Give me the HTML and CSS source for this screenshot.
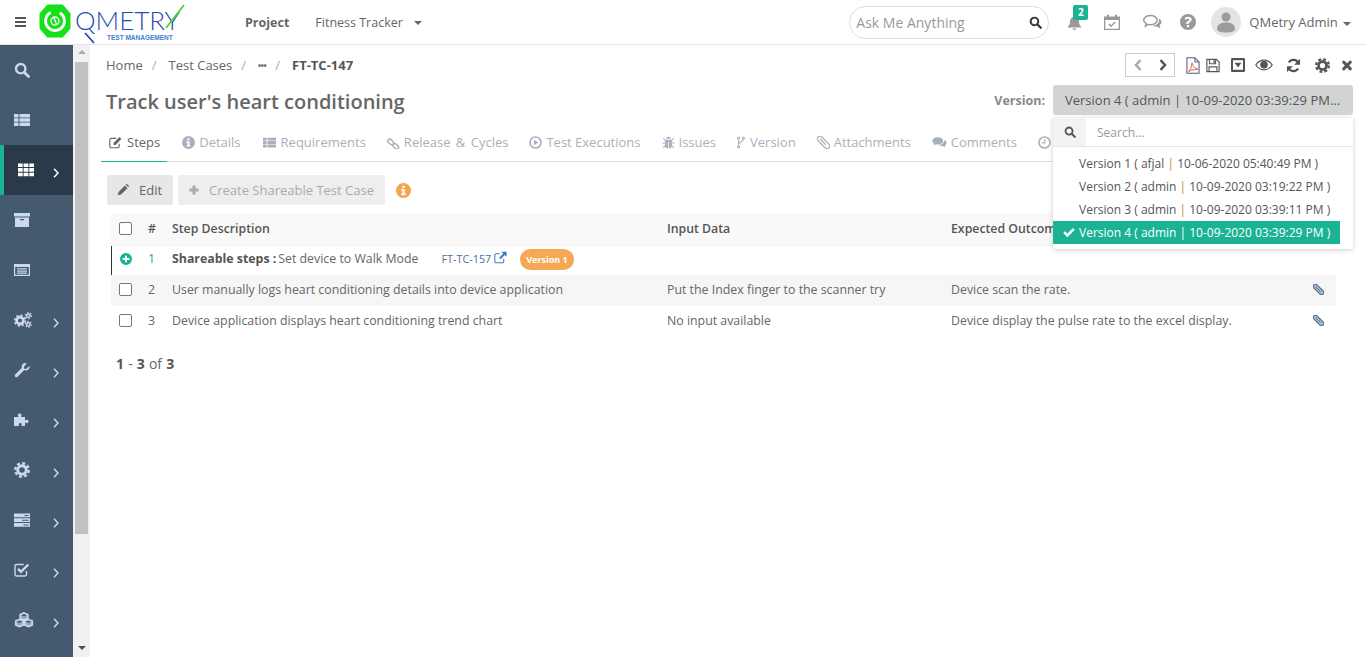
FILE: index.html
```html
<!DOCTYPE html>
<html>
<head>
    <title>QMetry Test Management</title>
    <link rel="stylesheet" href="styles.css">
</head>
<body>
    <svg class="sprite" xmlns="http://www.w3.org/2000/svg">
        <symbol id="i-search" viewBox="0 0 16 16"><circle cx="6.7" cy="6.7" r="4.7" fill="none" stroke="currentColor" stroke-width="2.4"/><path d="M10.2 10.2l4.3 4.3" stroke="currentColor" stroke-width="2.8" stroke-linecap="round"/></symbol>
        <symbol id="i-list" viewBox="0 0 16 16"><path fill="currentColor" d="M0 2h4.5v3.4H0zM5.5 2H16v3.4H5.5zM0 6.3h4.5v3.4H0zM5.5 6.3H16v3.4H5.5zM0 10.6h4.5V14H0zM5.5 10.6H16V14H5.5z"/></symbol>
        <symbol id="i-grid" viewBox="0 0 16 16"><path fill="currentColor" d="M0 1.500h4.700v3.600H0zM5.600 1.500h4.800v3.600H5.600zM11.300 1.500H16v3.600h-4.700zM0 6.100h4.700v3.600H0zM5.600 6.100h4.800v3.600H5.600zM11.300 6.100H16v3.600h-4.700zM0 10.700h4.700v3.600H0zM5.600 10.700h4.800v3.600H5.600zM11.300 10.700H16v3.600h-4.700z"/></symbol>
        <symbol id="i-archive" viewBox="0 0 16 16"><path fill="currentColor" fill-rule="evenodd" d="M0 1h16v3.500H0zM1 5.500h14V15H1zM6 7v1.200h4V7z"/></symbol>
        <symbol id="i-card" viewBox="0 0 16 16"><path fill="currentColor" fill-rule="evenodd" d="M0 2h16v12H0zM1.200 5v7.800h13.600V5zM3 6.200h10v1.400H3zM3 8.400h10v1.400H3zM3 10.600h10v1.200H3z"/></symbol>
        <symbol id="i-cogs" viewBox="0 0 18 16"><circle cx="6" cy="8.600" r="3.400" fill="none" stroke="currentColor" stroke-width="2.800"/><circle cx="6" cy="8.600" r="5.400" fill="none" stroke="currentColor" stroke-width="1.600" stroke-dasharray="2.200 2"/><circle cx="14.400" cy="3.600" r="1.700" fill="none" stroke="currentColor" stroke-width="1.500"/><circle cx="14.400" cy="3.600" r="3" fill="none" stroke="currentColor" stroke-width="1.100" stroke-dasharray="1.500 1.600"/><circle cx="14.400" cy="12.400" r="1.700" fill="none" stroke="currentColor" stroke-width="1.500"/><circle cx="14.400" cy="12.400" r="3" fill="none" stroke="currentColor" stroke-width="1.100" stroke-dasharray="1.500 1.600"/></symbol>
        <symbol id="i-wrench" viewBox="0 0 16 16"><path fill="currentColor" d="M15.600 4.200c.3 2.400-1.700 4.500-4.200 4.200-.4 0-.8-.1-1.100-.3L3.600 14.800c-.7.700-1.700.7-2.400 0-.7-.7-.7-1.700 0-2.400l6.700-6.700c-.8-2.200.8-4.700 3.300-4.700.5 0 1 .1 1.400.3L9.900 4.900l.4 1.800 1.800.4 2.600-2.700c.4-.1.700-.1.900-.2z"/></symbol>
        <symbol id="i-puzzle" viewBox="0 0 16 16"><path fill="currentColor" d="M0 5h4.200c.3 0 .3-.4 0-.8-.9-1.200-.2-2.700 1.500-2.700s2.400 1.500 1.500 2.700c-.3.400-.3.800 0 .8H11v3.200c0 .3.400.3.800 0 1.200-.9 2.700-.2 2.700 1.300s-1.500 2.200-2.700 1.300c-.4-.3-.8-.3-.8 0V14H7.500c-.3 0-.3-.4 0-.8.700-1 .1-2.200-1.300-2.200s-2 1.200-1.300 2.200c.3.400.3.800 0 .8H0z"/></symbol>
        <symbol id="i-gear" viewBox="0 0 16 16"><circle cx="8" cy="8" r="4.300" fill="none" stroke="currentColor" stroke-width="3"/><circle cx="8" cy="8" r="6.800" fill="none" stroke="currentColor" stroke-width="2.400" stroke-dasharray="3 2.340"/></symbol>
        <symbol id="i-server" viewBox="0 0 16 16"><path fill="currentColor" fill-rule="evenodd" d="M0 1.500h16v3.800H0zM0 6.200h16V10H0zM0 10.900h16v3.800H0zM10.500 3v1h4V3zM8 7.700v1h6.500v-1zM9.500 12.400v1h5v-1z"/></symbol>
        <symbol id="i-check-sq" viewBox="0 0 16 16"><path fill="none" stroke="currentColor" stroke-width="1.400" d="M12.500 9v3.300c0 1-.7 1.700-1.700 1.700H2.700C1.700 14 1 13.300 1 12.300V4.200c0-1 .7-1.700 1.700-1.700h7"/><path fill="none" stroke="currentColor" stroke-width="2.400" d="M4 6.800l3 3L14.300 2.500"/></symbol>
        <symbol id="i-cubes" viewBox="0 0 20 16"><path fill="none" stroke="currentColor" stroke-width="1.700" d="M10 1l3.800 1.500v4L10 8 6.200 6.500v-4zM5.500 7.500l3.800 1.500v4l-3.800 1.500L1.700 13V9zM14.500 7.500L18.300 9v4l-3.800 1.500-3.800-1.500V9z"/><path fill="currentColor" d="M6.500 3L10 4.300 13.500 3v3.300L10 7.700 6.500 6.300zM2 9.500l3.500 1.300L9 9.500v3.300l-3.500 1.400L2 12.800zM11 9.500l3.500 1.300L18 9.500v3.300l-3.500 1.400-3.500-1.400z" opacity=".6"/></symbol>
        <symbol id="i-chevron" viewBox="0 0 6 10"><path fill="none" stroke="currentColor" stroke-width="1.500" d="M1 .8L5 5 1 9.200"/></symbol>
        <symbol id="i-chevron-b" viewBox="0 0 8 12"><path fill="none" stroke="currentColor" stroke-width="2.500" d="M1.500 1.200L6 6l-4.500 4.800"/></symbol>
        <symbol id="i-chevron-l" viewBox="0 0 8 12"><path fill="none" stroke="currentColor" stroke-width="2.500" d="M6.500 1.200L2 6l4.500 4.800"/></symbol>
        <symbol id="i-bell" viewBox="0 0 16 16"><path fill="currentColor" d="M8 .5c.6 0 1 .4 1 1v.6c2.300.4 3.800 2.300 3.800 4.700 0 3 1 4.200 2.200 5.400v1H1v-1c1.200-1.200 2.200-2.400 2.200-5.400C3.200 4.400 4.700 2.500 7 2.100v-.6c0-.6.400-1 1-1zM6 14.500h4c0 1.100-.9 1.500-2 1.500s-2-.4-2-1.500z"/></symbol>
        <symbol id="i-calendar" viewBox="0 0 16 16"><path fill="currentColor" fill-rule="evenodd" d="M0 2.500h3V.8h2v1.700h6V.8h2v1.700h3V16H0zM1.300 6v8.700h13.400V6z"/><path fill="none" stroke="currentColor" stroke-width="1.400" d="M4.800 10l2.200 2.300 4.200-4.300"/></symbol>
        <symbol id="i-chats" viewBox="0 0 20 16"><path fill="none" stroke="currentColor" stroke-width="1.500" d="M8 1.500c3.700 0 6.700 2 6.700 4.600s-3 4.600-6.700 4.600c-.8 0-1.600-.1-2.300-.3L3 12.200l.6-2.700C2 8.700 1.200 7.500 1.200 6.100 1.200 3.500 4.300 1.500 8 1.500z"/><path fill="currentColor" d="M16.300 4.500c1.700.8 2.700 2 2.700 3.500 0 1.200-.7 2.400-2 3.200l.8 3-3.400-1.800c-1.500.2-3-.1-4.300-.7 3.500-.2 6.500-2.300 6.500-5.200 0-.7-.1-1.400-.3-2z"/></symbol>
        <symbol id="i-help" viewBox="0 0 16 16"><path fill="currentColor" fill-rule="evenodd" d="M8 0a8 8 0 110 16A8 8 0 018 0zM7 11v2.300h2.200V11zM8.200 2.700c-1.900 0-3.100.9-3.700 2.100l1.500 1.100c.5-.8 1-1.200 2-1.200.8 0 1.400.4 1.400 1 0 1.400-3.300 1.300-3.300 4.300h2.200c0-1.800 3.400-1.900 3.400-4.500 0-1.800-1.600-2.800-3.500-2.800z"/></symbol>
        <symbol id="i-pdf" viewBox="0 0 15 18"><path fill="none" stroke="#4a6078" stroke-width="1.100" d="M1 .8h8.500L14 5.300v11.900H1z"/><path fill="none" stroke="#4a6078" stroke-width="1" d="M9.500 .8v4.500H14"/><path fill="none" stroke="#d8604a" stroke-width="1" d="M2.800 15c2.400-1.500 3.400-5 3.200-8 0-1 1.100-1 1.100 0 0 3 2 5 4.900 5.300.8.100.8 1 0 1-3 0-6.400.4-7.800 1.700-.8.700-1.700.4-1.400 0z"/></symbol>
        <symbol id="i-save" viewBox="0 0 16 16"><path fill="none" stroke="currentColor" stroke-width="1.300" d="M1 1h11l3 3v11H1zM4 1v5h7V1M3.500 15V9.500h9V15"/><path fill="currentColor" d="M8.500 2H10v3H8.500z"/></symbol>
        <symbol id="i-drop-sq" viewBox="1 1 14 14"><path fill="currentColor" fill-rule="evenodd" d="M2.500 1h11C14.500 1 15 1.500 15 2.500v11c0 1-.5 1.500-1.500 1.500h-11C1.500 15 1 14.500 1 13.500v-11C1 1.500 1.500 1 2.500 1zM3 3.200v9.600h10V3.200zM4.500 5.800h7L8 10.400z"/></symbol>
        <symbol id="i-eye" viewBox="0 0 18 12"><path fill="none" stroke="currentColor" stroke-width="1.200" d="M.8 6C3 2.800 5.800 1.200 9 1.200s6 1.600 8.200 4.800C15 9.200 12.200 10.800 9 10.800S3 9.200.8 6z"/><circle cx="9" cy="5.800" r="3.800" fill="currentColor"/></symbol>
        <symbol id="i-refresh" viewBox="0 0 16 16"><path fill="none" stroke="currentColor" stroke-width="2.300" d="M13.300 5.500A5.800 5.800 0 003 4.800M2.700 10.500A5.800 5.800 0 0013 11.200"/><path fill="currentColor" d="M15 .8v6.400H8.700zM1 15.200V8.800h6.300z"/></symbol>
        <symbol id="i-close" viewBox="0 0 16 16"><path stroke="currentColor" stroke-width="3.800" stroke-linecap="round" d="M3.500 3.500l9 9M12.500 3.500l-9 9"/></symbol>
        <symbol id="i-edit" viewBox="0 0 16 16"><path fill="none" stroke="currentColor" stroke-width="1.400" d="M12.500 9.500v3.300c0 1-.7 1.700-1.700 1.700H2.700c-1 0-1.700-.7-1.700-1.700V4.700c0-1 .7-1.700 1.700-1.700H9"/><path fill="currentColor" d="M5.500 8.500L12.800 1.200l2.500 2.500L8 11H5.500z"/></symbol>
        <symbol id="i-info" viewBox="0 0 16 16"><path fill="currentColor" fill-rule="evenodd" d="M8 0a8 8 0 110 16A8 8 0 018 0zM6.700 2.800v2.400h2.600V2.800zM5.500 6.500v1.700h1.200v3.100H5.500V13h5v-1.700H9.300V6.500z"/></symbol>
        <symbol id="i-link" viewBox="0 0 16 16"><g fill="none" stroke="currentColor" stroke-width="1.800"><rect x="-.8" y="-2.300" width="8" height="4.600" rx="2.300" transform="translate(2.200 5.200) rotate(42)"/><rect x="-.8" y="-2.300" width="8" height="4.600" rx="2.300" transform="translate(8.300 10.600) rotate(42)"/></g></symbol>
        <symbol id="i-play" viewBox="0 0 16 16"><circle cx="8" cy="8" r="6.800" fill="none" stroke="currentColor" stroke-width="2"/><path fill="currentColor" d="M6 4.500l5.500 3.500L6 11.500z"/></symbol>
        <symbol id="i-bug" viewBox="0 0 16 16"><path fill="currentColor" d="M5 3.500C5 2 6.300 1 8 1s3 1 3 2.500zM3.800 4.500h8.400V12c0 1.800-1.800 3.300-3.700 3.500V7h-1v8.500C5.600 15.300 3.800 13.800 3.800 12z"/><path fill="none" stroke="currentColor" stroke-width="1.300" d="M1.500 2.500l2.500 3M14.500 2.500l-2.500 3M.5 8.500H4M15.500 8.500H12M1.500 14.500l2.700-3M14.500 14.500l-2.700-3"/></symbol>
        <symbol id="i-fork" viewBox="0 0 10 16"><g fill="none" stroke="currentColor" stroke-width="1.300"><circle cx="2" cy="2.500" r="1.300"/><circle cx="2" cy="13.500" r="1.300"/><circle cx="8" cy="2.500" r="1.300"/><path d="M2 4v8M8 4c0 3.500-6 3-6 6"/></g></symbol>
        <symbol id="i-clip" viewBox="0 0 16 16"><g transform="rotate(-45 8 8)"><rect x="4.800" y="-1.500" width="6.400" height="19" rx="3.200" fill="#a9bfe0" stroke="currentColor" stroke-width="1.600"/><path d="M8 2v10" stroke="currentColor" stroke-width="1.300"/></g></symbol>
        <symbol id="i-clip-line" viewBox="0 0 16 16"><g transform="rotate(-45 8 8)" fill="none" stroke="currentColor" stroke-width="1.500"><rect x="4.800" y="-1.500" width="6.400" height="19" rx="3.200"/><path d="M8 2v10"/></g></symbol>
        <symbol id="i-comments" viewBox="0 0 18 16"><path fill="currentColor" d="M7 1.500c3.600 0 6.500 2 6.500 4.500S10.600 10.500 7 10.500c-.8 0-1.500-.1-2.200-.3L1.800 12l.8-2.600C1.100 8.500.3 7.300.3 6 .3 3.500 3.400 1.500 7 1.500zM14.800 5c1.700.8 2.900 2 2.900 3.500 0 1.300-.8 2.400-2.100 3.200l.7 2.300-2.800-1.600c-1.800.4-4-.1-5.300-1.200 3.700-.1 6.800-2.600 6.600-6.200z"/></symbol>
        <symbol id="i-clock" viewBox="0 0 16 16"><circle cx="8" cy="8" r="6.800" fill="none" stroke="currentColor" stroke-width="2"/><path fill="none" stroke="currentColor" stroke-width="1.600" d="M8.500 3.800V8.500H4.800"/></symbol>
        <symbol id="i-pencil" viewBox="0 0 16 16"><path fill="currentColor" d="M1 15l1-4.500L10.500 2l3.500 3.500L5.500 14zM11.500 1l.7-.6c.5-.4 1-.4 1.400 0l2 2c.4.400.4.900 0 1.300l-.6.700z"/></symbol>
        <symbol id="i-plus" viewBox="0 0 16 16"><path fill="currentColor" d="M6 2h4v4h4v4h-4v4H6v-4H2V6h4z"/></symbol>
        <symbol id="i-plus-c" viewBox="0 0 16 16"><path fill="currentColor" fill-rule="evenodd" d="M8 0a8 8 0 110 16A8 8 0 018 0zM6.700 3.500v3.200H3.500v2.600h3.200v3.200h2.600V9.300h3.200V6.700H9.300V3.500z"/></symbol>
        <symbol id="i-external" viewBox="0 0 16 16"><path fill="none" stroke="currentColor" stroke-width="1.300" d="M12 9.500v3.300c0 1-.7 1.700-1.700 1.700H2.700c-1 0-1.700-.7-1.700-1.700V5.200c0-1 .7-1.700 1.700-1.700H7"/><path fill="currentColor" d="M9 .8h6.500v6.400L13.200 5l-5 5L6.400 8.200l5-5z"/></symbol>
        <symbol id="i-tick" viewBox="0 0 16 16"><path fill="none" stroke="currentColor" stroke-width="3.400" d="M1.500 8.200l4.300 4.300 8.700-8.700"/></symbol>
        <symbol id="i-user" viewBox="0 0 30 30"><circle cx="15" cy="15" r="15" fill="#e4e4e4"/><circle cx="15" cy="10" r="4.500" fill="#9c9c9c"/><path fill="#9c9c9c" d="M6 22c0-4 3-6.500 9-6.500s9 2.500 9 6.500c0 2-3 3.500-9 3.500S6 24 6 22z"/></symbol>
    </svg>

    <div class="app">
        <header class="topbar">
            <button class="hamburger"><span></span><span></span><span></span></button>
            <div class="logo">
                <svg class="logo-hex" viewBox="0 0 32 34">
                    <path fill="#15e01a" stroke="#15e01a" stroke-width="3" stroke-linejoin="round" d="M9 2h14l7 8v14l-7 8H9l-7-8V10z"/>
                    <circle cx="16" cy="17" r="9.500" fill="none" stroke="#fff" stroke-width="2.800" stroke-dasharray="50 9.700" transform="rotate(-60 16 17)"/>
                    <circle cx="16" cy="17" r="4" fill="none" stroke="#fff" stroke-width="1.300"/>
                    <path d="M15 14l2.500 6" stroke="#fff" stroke-width="1.300"/>
                </svg>
                <div class="logo-text">
                    <div class="logo-name">QMETRY</div>
                    <div class="logo-sub">TEST MANAGEMENT</div>
                </div>
                <svg class="logo-marks" viewBox="0 0 112 42">
                    <path d="M11 29l9 10" stroke="#1f4fb0" stroke-width="1.800"/>
                    <path d="M92 24L110 1" fill="none" stroke="#4fd12a" stroke-width="1.800"/>
                </svg>
            </div>
            <span class="top-project">Project</span>
            <span class="top-tracker">Fitness Tracker<i class="caret"></i></span>
            <div class="ask">
                <span>Ask Me Anything</span>
                <svg class="ico ask-ico"><use href="#i-search"/></svg>
            </div>
            <div class="notify">
                <svg class="ico"><use href="#i-bell"/></svg>
                <b class="badge">2</b>
            </div>
            <svg class="ico top-ico top-cal"><use href="#i-calendar"/></svg>
            <svg class="ico top-ico top-chat"><use href="#i-chats"/></svg>
            <svg class="ico top-ico top-help"><use href="#i-help"/></svg>
            <svg class="avatar"><use href="#i-user"/></svg>
            <span class="top-user">QMetry Admin<i class="caret"></i></span>
        </header>

        <div class="body">
            <nav class="sidebar">
                <a class="nav-item"><svg class="ico"><use href="#i-search"/></svg></a>
                <a class="nav-item"><svg class="ico"><use href="#i-list"/></svg></a>
                <a class="nav-item active"><svg class="ico"><use href="#i-grid"/></svg><svg class="chev"><use href="#i-chevron"/></svg></a>
                <a class="nav-item"><svg class="ico"><use href="#i-archive"/></svg></a>
                <a class="nav-item"><svg class="ico"><use href="#i-card"/></svg></a>
                <a class="nav-item"><svg class="ico ico-cogs"><use href="#i-cogs"/></svg><svg class="chev"><use href="#i-chevron"/></svg></a>
                <a class="nav-item"><svg class="ico"><use href="#i-wrench"/></svg><svg class="chev"><use href="#i-chevron"/></svg></a>
                <a class="nav-item"><svg class="ico"><use href="#i-puzzle"/></svg><svg class="chev"><use href="#i-chevron"/></svg></a>
                <a class="nav-item"><svg class="ico"><use href="#i-gear"/></svg><svg class="chev"><use href="#i-chevron"/></svg></a>
                <a class="nav-item"><svg class="ico"><use href="#i-server"/></svg><svg class="chev"><use href="#i-chevron"/></svg></a>
                <a class="nav-item"><svg class="ico"><use href="#i-check-sq"/></svg><svg class="chev"><use href="#i-chevron"/></svg></a>
                <a class="nav-item"><svg class="ico ico-wide"><use href="#i-cubes"/></svg><svg class="chev"><use href="#i-chevron"/></svg></a>
            </nav>

            <div class="scrollbar">
                <i class="arrow-up"></i>
                <div class="thumb"></div>
                <i class="arrow-down"></i>
            </div>

            <main class="content">
                <div class="crumb-row">
                    <div class="crumbs">
                        <span>Home</span><em>/</em>
                        <span>Test Cases</span><em>/</em>
                        <b class="dots">&bull;&bull;&bull;</b><em>/</em>
                        <strong>FT-TC-147</strong>
                    </div>
                    <div class="actions">
                        <div class="pager">
                            <svg class="pg-ico off"><use href="#i-chevron-l"/></svg>
                            <svg class="pg-ico"><use href="#i-chevron-b"/></svg>
                        </div>
                        <svg class="act a-pdf"><use href="#i-pdf"/></svg>
                        <svg class="act a-save"><use href="#i-save"/></svg>
                        <svg class="act a-drop"><use href="#i-drop-sq"/></svg>
                        <svg class="act a-eye"><use href="#i-eye"/></svg>
                        <svg class="act a-refresh"><use href="#i-refresh"/></svg>
                        <svg class="act a-gear"><use href="#i-gear"/></svg>
                        <svg class="act a-close"><use href="#i-close"/></svg>
                    </div>
                </div>

                <div class="title-row">
                    <h1>Track user's heart conditioning</h1>
                    <div class="version">
                        <label>Version:</label>
                        <div class="version-select">
                            <button class="version-btn">Version 4 ( admin | 10-09-2020 03:39:29 PM...</button>
                            <div class="version-menu">
                                <div class="menu-search">
                                    <span class="menu-search-ico"><svg class="ico"><use href="#i-search"/></svg></span>
                                    <span class="menu-search-text">Search...</span>
                                </div>
                                <ul>
                                    <li>Version 1 ( afjal <u>|</u> 10-06-2020 05:40:49 PM )</li>
                                    <li>Version 2 ( admin <u>|</u> 10-09-2020 03:19:22 PM )</li>
                                    <li>Version 3 ( admin <u>|</u> 10-09-2020 03:39:11 PM )</li>
                                    <li class="selected"><svg class="tick"><use href="#i-tick"/></svg>Version 4 ( admin | 10-09-2020 03:39:29 PM )</li>
                                </ul>
                            </div>
                        </div>
                    </div>
                </div>

                <div class="tabs">
                    <a class="tab active"><svg class="ico ico-15"><use href="#i-edit"/></svg>Steps</a>
                    <a class="tab"><svg class="ico"><use href="#i-info"/></svg>Details</a>
                    <a class="tab"><svg class="ico ico-15"><use href="#i-list"/></svg>Requirements</a>
                    <a class="tab tab-spaced"><svg class="ico"><use href="#i-link"/></svg>Release &amp; Cycles</a>
                    <a class="tab"><svg class="ico"><use href="#i-play"/></svg>Test Executions</a>
                    <a class="tab"><svg class="ico"><use href="#i-bug"/></svg>Issues</a>
                    <a class="tab"><svg class="ico ico-fork"><use href="#i-fork"/></svg>Version</a>
                    <a class="tab"><svg class="ico"><use href="#i-clip-line"/></svg>Attachments</a>
                    <a class="tab"><svg class="ico ico-15"><use href="#i-comments"/></svg>Comments</a>
                    <a class="tab"><svg class="ico"><use href="#i-clock"/></svg>History</a>
                </div>

                <div class="toolbar">
                    <button class="btn btn-edit"><svg class="ico"><use href="#i-pencil"/></svg>Edit</button>
                    <button class="btn btn-share"><svg class="ico"><use href="#i-plus"/></svg>Create Shareable Test Case</button>
                    <svg class="toolbar-info"><use href="#i-info"/></svg>
                </div>

                <div class="steps">
                    <div class="row head">
                        <span><i class="check"></i></span>
                        <span>#</span>
                        <span>Step Description</span>
                        <span>Input Data</span>
                        <span>Expected Outcome</span>
                        <span></span>
                    </div>
                    <div class="row shared">
                        <span><svg class="plus-c"><use href="#i-plus-c"/></svg></span>
                        <span class="num-link">1</span>
                        <span class="shared-cell"><b>Shareable steps :</b> Set device to Walk Mode<a class="case-link">FT-TC-157<svg class="ext"><use href="#i-external"/></svg></a><em class="pill">Version 1</em></span>
                        <span></span>
                        <span></span>
                        <span></span>
                    </div>
                    <div class="row odd">
                        <span><i class="check"></i></span>
                        <span>2</span>
                        <span>User manually logs heart conditioning details into device application</span>
                        <span>Put the Index finger to the scanner try</span>
                        <span>Device scan the rate.</span>
                        <span><svg class="clip"><use href="#i-clip"/></svg></span>
                    </div>
                    <div class="row last">
                        <span><i class="check"></i></span>
                        <span>3</span>
                        <span>Device application displays heart conditioning trend chart</span>
                        <span>No input available</span>
                        <span>Device display the pulse rate to the excel display.</span>
                        <span><svg class="clip"><use href="#i-clip"/></svg></span>
                    </div>
                </div>

                <p class="count"><b>1</b> - <b>3</b> of <b>3</b></p>
            </main>
        </div>
    </div>
</body>
</html>
```

FILE: styles.css
```css
* {
    box-sizing: border-box;
}
html, body {
    margin: 0;
    height: 100%;
    overflow: hidden;
}
body {
    font-family: "Open Sans", sans-serif;
    font-size: 13px;
    color: #666;
    background: #fff;
}
button {
    font-family: inherit;
    border: 0;
    padding: 0;
}
.sprite {
    display: none;
}
.app {
    display: flex;
    flex-direction: column;
    height: 657px;
}
.ico {
    width: 14px;
    height: 14px;
    flex: none;
}
.caret {
    display: inline-block;
    border-top: 4px solid #666;
    border-left: 4px solid transparent;
    border-right: 4px solid transparent;
    vertical-align: middle;
}

/* top bar */
.topbar {
    display: flex;
    align-items: center;
    height: 45px;
    flex: none;
    border-bottom: 1px solid #e5e5e5;
    background: #fff;
}
.hamburger {
    width: 11px;
    margin-left: 15px;
    background: none;
    display: flex;
    flex-direction: column;
    gap: 2px;
}
.hamburger span {
    height: 2px;
    background: #555;
}
.logo {
    position: relative;
    display: flex;
    width: 146px;
    height: 36px;
    margin-left: 13px;
    flex: none;
}
.logo-hex {
    width: 32px;
    height: 34px;
    flex: none;
}
.logo-text {
    margin-left: 4px;
    width: 110px;
}
.logo-name {
    font-family: "Lato", sans-serif;
    font-weight: 300;
    font-size: 26px;
    line-height: 28px;
    height: 28px;
    margin-top: 2px;
    color: #1f4fb0;
}
.logo-sub {
    font-family: "Liberation Sans", sans-serif;
    font-weight: 700;
    font-size: 6.5px;
    line-height: 7px;
    margin-left: 32px;
    color: #3f7fd0;
    white-space: nowrap;
}
.logo-marks {
    position: absolute;
    left: 35px;
    top: 0;
    width: 112px;
    height: 42px;
}
.top-project {
    margin-left: 60px;
    font-weight: 700;
    font-size: 12.5px;
}
.top-tracker {
    margin-left: 26px;
    width: 534px;
    font-size: 12.5px;
}
.top-tracker .caret {
    margin-left: 11px;
}
.ask {
    width: 200px;
    height: 33px;
    border: 1px solid #ddd;
    border-radius: 17px;
    display: flex;
    align-items: center;
    justify-content: space-between;
    padding: 0 6px;
    font-size: 14px;
    color: #999;
}
.ask-ico {
    color: #333;
    width: 13px;
    height: 13px;
}
.notify {
    position: relative;
    margin-left: 18px;
    width: 14px;
    height: 16px;
    color: #999;
}
.notify .ico {
    width: 15px;
    height: 15px;
    margin-top: 1px;
}
.badge {
    position: absolute;
    left: 6px;
    top: -9px;
    width: 15px;
    height: 15px;
    border-radius: 2px;
    background: #1ab394;
    color: #fff;
    font-size: 10px;
    line-height: 14px;
    text-align: center;
}
.top-ico {
    color: #999;
    width: 16px;
    height: 16px;
}
.top-cal {
    margin-left: 23px;
}
.top-chat {
    margin-left: 22px;
    width: 21px;
}
.top-help {
    margin-left: 17px;
}
.avatar {
    width: 30px;
    height: 30px;
    margin-left: 15px;
    flex: none;
}
.top-user {
    margin-left: 8px;
    white-space: nowrap;
}
.top-user .caret {
    margin-left: 5px;
}

/* layout */
.body {
    display: flex;
    flex: 1;
    min-height: 0;
}
.sidebar {
    width: 73px;
    flex: none;
    background: #435a6f;
    padding-bottom: 12px;
    display: flex;
    flex-direction: column;
}
.nav-item {
    height: 50px;
    flex: none;
    display: grid;
    grid-template-columns: 39px 6px;
    align-items: center;
    padding-left: 14px;
    color: #ccd9ec;
}
.nav-item .ico {
    width: 16px;
    height: 16px;
}
.nav-item .ico-cogs {
    width: 18px;
}
.nav-item .ico-wide {
    width: 20px;
}
.nav-item .chev {
    width: 6px;
    height: 10px;
    margin-top: 6px;
}
.nav-item.active {
    background: #2a3a4a;
    border-left: 4px solid #1ab394;
    grid-template-columns: 35px 6px;
    color: #fff;
}
.scrollbar {
    width: 17px;
    flex: none;
    background: #f1f1f1;
    padding: 5px 2px 0;
    display: flex;
    flex-direction: column;
    align-items: center;
}
.arrow-up {
    border-bottom: 4px solid #aaa;
    border-left: 4px solid transparent;
    border-right: 4px solid transparent;
}
.thumb {
    width: 13px;
    height: 472px;
    margin-top: 8px;
    background: #c1c1c1;
}
.arrow-down {
    margin-top: auto;
    margin-bottom: 7px;
    border-top: 4px solid #505050;
    border-left: 4px solid transparent;
    border-right: 4px solid transparent;
}
.content {
    flex: 1;
    min-width: 0;
    padding: 8px 13px 0 16px;
    overflow: hidden;
}

/* breadcrumb + actions */
.crumb-row {
    display: flex;
    justify-content: space-between;
    align-items: center;
    height: 24px;
}
.crumbs {
    display: flex;
    align-items: center;
}
.crumbs em {
    font-style: normal;
    color: #aaa;
    margin: 0 12px 0 9px;
}
.crumbs .dots {
    font-size: 8px;
    letter-spacing: -.3px;
}
.crumbs strong {
    font-weight: 700;
    color: #555;
}
.actions {
    display: flex;
    align-items: center;
    color: #555;
}
.pager {
    width: 50px;
    height: 24px;
    border: 1px solid #ccc;
    display: flex;
    align-items: center;
    justify-content: space-between;
    padding: 0 7px 0 8px;
    margin-right: 11px;
}
.pg-ico {
    width: 8px;
    height: 12px;
}
.pg-ico.off {
    color: #aaa;
}
.act {
    height: 15px;
    width: 14px;
    flex: none;
}
.a-pdf {
    height: 17px;
}
.a-save {
    margin-left: 6px;
}
.a-drop {
    height: 14px;
    margin-left: 11px;
}
.a-eye {
    width: 18px;
    height: 12px;
    margin-left: 10px;
}
.a-refresh {
    width: 15px;
    margin-left: 13px;
}
.a-gear {
    width: 15px;
    margin-left: 14px;
}
.a-close {
    width: 12px;
    height: 13px;
    margin-left: 11px;
}

/* title + version */
.title-row {
    display: flex;
    justify-content: space-between;
    align-items: center;
    height: 30px;
    margin-top: 8px;
}
h1 {
    margin: 2px 0 0;
    font-size: 20px;
    font-weight: 600;
    color: #666;
}
.version {
    display: flex;
    align-items: center;
}
.version label {
    font-weight: 700;
    font-size: 12.5px;
    color: #888;
    margin-right: 8px;
}
.version-select {
    position: relative;
    width: 300px;
}
.version-btn {
    display: block;
    width: 100%;
    height: 30px;
    background: #d2d4d4;
    border-radius: 3px;
    color: #555;
    font-size: 13px;
    text-align: left;
    padding-left: 12px;
    white-space: nowrap;
}
.version-menu {
    position: absolute;
    z-index: 5;
    top: 33px;
    left: 0;
    width: 100%;
    height: 131px;
    background: #fff;
    box-shadow: 0 1px 5px rgba(0, 0, 0, .2);
    border-radius: 0 0 3px 3px;
}
.menu-search {
    display: flex;
    height: 29px;
    border-bottom: 1px solid #e5e5e5;
}
.menu-search-ico {
    width: 33px;
    background: #f3f3f3;
    display: flex;
    align-items: center;
    justify-content: center;
    color: #555;
}
.menu-search-ico .ico {
    width: 12px;
    height: 12px;
}
.menu-search-text {
    padding-left: 11px;
    line-height: 29px;
    color: #999;
    font-size: 12px;
}
.version-menu ul {
    list-style: none;
    margin: 5px 0 0;
    padding: 0;
    width: 287px;
}
.version-menu li {
    height: 23px;
    line-height: 23px;
    padding-left: 26px;
    font-size: 12px;
    color: #555;
    white-space: nowrap;
    position: relative;
}
.version-menu li u {
    text-decoration: none;
    color: #c8873d;
}
.version-menu li.selected {
    background: #1ab394;
    color: #fff;
}
.tick {
    position: absolute;
    left: 10px;
    top: 5px;
    width: 12px;
    height: 12px;
}

/* tabs */
.tabs {
    display: flex;
    gap: 7px;
    height: 37px;
    margin: 10px 0 0 -5px;
    border-bottom: 1px solid #ddd;
    white-space: nowrap;
}
.tab {
    display: flex;
    align-items: center;
    padding: 0 7px 2px;
    color: #a9b0bd;
    height: 36px;
}
.tab-spaced {
    word-spacing: 2px;
}
.tab .ico {
    width: 13px;
    height: 13px;
    margin-right: 4px;
}
.tab .ico-15 {
    width: 15px;
}
.tab .ico-fork {
    width: 8px;
    margin-right: 5px;
}
.tab.active {
    color: #666;
    border-bottom: 1px solid #1ab394;
    height: 37px;
    margin-right: 1px;
}

/* toolbar */
.toolbar {
    display: flex;
    align-items: center;
    gap: 5px;
    margin: 13px 0 0 1px;
}
.btn {
    display: flex;
    align-items: center;
    height: 30px;
    border-radius: 2px;
    font-size: 13px;
}
.btn .ico {
    width: 12px;
    height: 12px;
    margin-right: 9px;
}
.btn-edit {
    width: 66px;
    padding-left: 10px;
    background: #e7e7e7;
    color: #666;
}
.btn-edit .ico {
    margin-right: 10px;
}
.btn-share {
    width: 207px;
    padding-left: 10px;
    background: #eee;
    color: #aaa;
}
.toolbar-info {
    width: 15px;
    height: 15px;
    margin-left: 6px;
    color: #f6a44c;
}

/* steps table */
.steps {
    margin: 8px 0 0 5px;
    width: 1225px;
}
.row {
    display: grid;
    grid-template-columns: 29px 24px 495px 284px 1fr 23px;
    align-items: center;
    height: 30.5px;
    padding: 0 0 2px 8px;
    font-size: 12.35px;
    color: #666;
}
.row.head {
    height: 33px;
    padding-bottom: 1px;
    background: #f9f9f9;
    border-bottom: 1px solid #f0f0f0;
    font-weight: 600;
    font-size: 12.3px;
    color: #555;
}
.row > span {
    display: flex;
    align-items: center;
    white-space: nowrap;
}
.row.odd {
    background: #f6f6f6;
}
.row.last {
    padding-bottom: 0;
}
.row.shared {
    height: 29px;
    border-left: 1px solid #333;
    padding: 0 0 4px 7px;
}
.check {
    display: block;
    width: 13px;
    height: 13px;
    border: 1px solid #777;
    border-radius: 2px;
    background: #fff;
}
.plus-c {
    width: 12px;
    height: 12px;
    color: #1ab394;
    margin-left: 1px;
}
.num-link {
    color: #2b9d90;
}
.shared-cell b {
    color: #555;
    margin-right: 2px;
}
.case-link {
    display: inline-flex;
    align-items: center;
    margin-left: 23px;
    font-size: 10.8px;
    color: #4a6f9c;
}
.ext {
    width: 13px;
    height: 13px;
    margin: -2px 0 0 3px;
    color: #3a7fc1;
}
.pill {
    font-style: normal;
    margin: 2px 0 0 13px;
    height: 21px;
    line-height: 21px;
    padding: 0 6px;
    border-radius: 11px;
    background: #f6a955;
    color: #fff;
    font-size: 9px;
    font-weight: 700;
}
.clip {
    width: 11px;
    height: 11px;
    color: #5a6a7a;
}
.count {
    margin: 18px 0 0 10px;
    font-size: 14px;
    word-spacing: .5px;
    color: #666;
}
.count b {
    color: #555;
}
```
